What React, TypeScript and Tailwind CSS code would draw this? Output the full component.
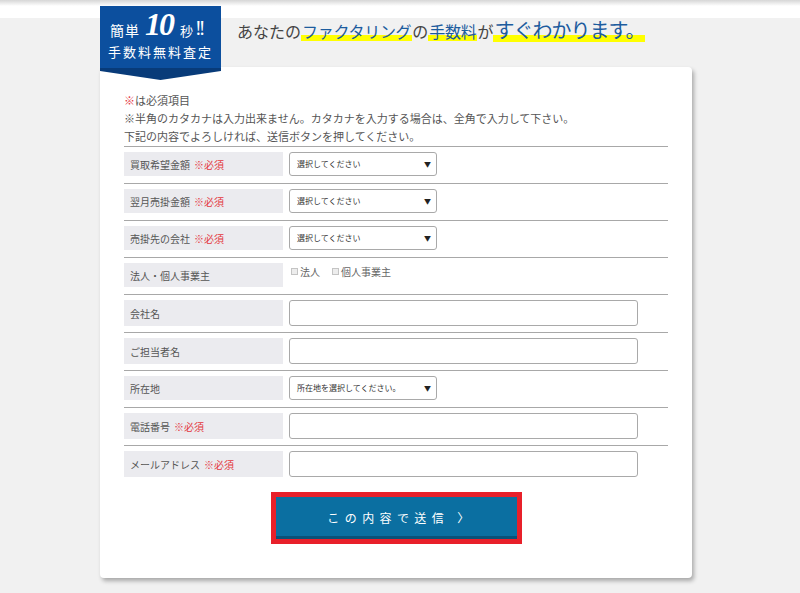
import type { ReactNode } from "react";

const JP = "font-['Noto_Sans_CJK_JP','Noto_Sans',sans-serif]";

type Row =
  | { label: string; required?: boolean; kind: "select"; placeholder: string }
  | { label: string; required?: boolean; kind: "input" }
  | { label: string; required?: boolean; kind: "check"; options: string[] };

const rows: Row[] = [
  { label: "買取希望金額", required: true, kind: "select", placeholder: "選択してください" },
  { label: "翌月売掛金額", required: true, kind: "select", placeholder: "選択してください" },
  { label: "売掛先の会社", required: true, kind: "select", placeholder: "選択してください" },
  { label: "法人・個人事業主", kind: "check", options: ["法人", "個人事業主"] },
  { label: "会社名", kind: "input" },
  { label: "ご担当者名", kind: "input" },
  { label: "所在地", kind: "select", placeholder: "所在地を選択してください。" },
  { label: "電話番号", required: true, kind: "input" },
  { label: "メールアドレス", required: true, kind: "input" },
];

function Marker({ children, big }: { children: ReactNode; big?: boolean }) {
  return (
    <span
      className={
        "text-[#1d5c9e] px-[1px] bg-[linear-gradient(to_bottom,transparent_68%,#ffff00_68%,#ffff00_92%,transparent_92%)] " +
        (big ? "text-[20px] tracking-[-1px]" : "text-[16px] tracking-[-0.3px]")
      }
    >
      {children}
    </span>
  );
}

function Badge() {
  return (
    <div className="absolute left-0 top-[-12px] w-[121px] h-[74px] bg-[linear-gradient(to_bottom,#0c4f9e_84%,#083b79_84%)] [clip-path:polygon(0_0,100%_0,100%_88%,50%_100%,0_88%)] text-white">
      <div className="flex items-end pl-[10px] pt-[4px] h-[34px]">
        <span className={`${JP} text-[14px] leading-none pb-[3px] tracking-[1px]`}>簡単</span>
        <span className="font-['Liberation_Serif',serif] italic font-bold text-[32px] leading-none ml-[5px] tracking-[-2px]">
          10
        </span>
        <span className={`${JP} text-[13px] leading-none pb-[3px] ml-[7px]`}>秒</span>
        <span className="font-['Liberation_Serif',serif] text-[20px] leading-none pb-[2px] ml-[2px] tracking-[-3px]">!!</span>
      </div>
      <div className={`${JP} text-[13px] leading-none pl-[8px] mt-[5px] tracking-[2px] whitespace-nowrap`}>
        手数料無料査定
      </div>
    </div>
  );
}

function Control({ row }: { row: Row }) {
  if (row.kind === "select") {
    return (
      <div className="w-[148px] h-[24px] border border-[#a9a9a9] rounded-[3px] bg-white flex items-center justify-between pl-[7px] pr-[5px]">
        <span className={`${JP} text-[8px] text-[#333]`}>{row.placeholder}</span>
        <span className="text-[7px] text-[#222]">▼</span>
      </div>
    );
  }
  if (row.kind === "input") {
    return <input className="w-[349px] h-[26px] border border-[#a9a9a9] rounded-[3px] bg-white outline-none" />;
  }
  return (
    <div className="flex items-center gap-[12px] pt-[1px] pl-[2px] self-start">
      {row.options.map((o) => (
        <label key={o} className="flex items-center gap-[2px]">
          <span className="w-[7px] h-[7px] border border-[#c4c4c4] bg-[#ededed]" />
          <span className={`${JP} text-[10px] text-[#666]`}>{o}</span>
        </label>
      ))}
    </div>
  );
}

export default function App() {
  return (
    <div className={`min-h-screen bg-[#f1f1f1] ${JP}`}>
      <div className="h-[18px] bg-[linear-gradient(to_bottom,#d6d6d6,#ffffff_6px)]" />
      <div className="relative ml-[100px] w-[592px] pb-[14px]">
        <Badge />
        <div className="h-[49px] pl-[137px] flex items-start">
          <h1 className="text-[#444] text-[16px] leading-[26px] font-normal whitespace-nowrap -mt-[1px]">
            あなたの<Marker>ファクタリング</Marker>の<Marker>手数料</Marker>が<Marker big>すぐわかります。</Marker>
          </h1>
        </div>

        <div className="bg-white rounded-[4px] shadow-[2px_3px_4px_rgba(0,0,0,0.3)] px-[24px] pt-[24px] pb-[34px]">
          <div className="text-[11px] leading-[18px] text-[#555]">
            <p>
              <span className="text-[#e4393f]">※</span>は必須項目
            </p>
            <p>※半角のカタカナは入力出来ません。カタカナを入力する場合は、全角で入力して下さい。</p>
            <p>下記の内容でよろしければ、送信ボタンを押してください。</p>
          </div>

          <div className="mt-px">
            {rows.map((r) => (
              <div
                key={r.label}
                className={
                  "border-t border-[#a8a8a8] flex gap-[6px] pt-[5px] " +
                  (r.kind === "input" ? "pb-[6px]" : "pb-[7px]")
                }
              >
                <div
                  className={
                    "w-[159px] bg-[#ebebef] flex items-center pl-[6px] text-[10px] text-[#555] " +
                    (r.kind === "input" ? "h-[26px]" : "h-[24px]")
                  }
                >
                  {r.label}
                  {r.required && <span className="text-[#e4393f] ml-[4px]">※必須</span>}
                </div>
                <Control row={r} />
              </div>
            ))}
          </div>

          <div className="flex justify-center mt-[9px]">
            <button className="w-[251px] h-[52px] border-[5px] border-[#e8202a] bg-[#0b6fa1] shadow-[inset_0_-3px_0_#0a5178] text-white text-[12px] tracking-[0.45em] pl-[10px]">
              この内容で送信 〉
            </button>
          </div>
        </div>
      </div>
    </div>
  );
}
